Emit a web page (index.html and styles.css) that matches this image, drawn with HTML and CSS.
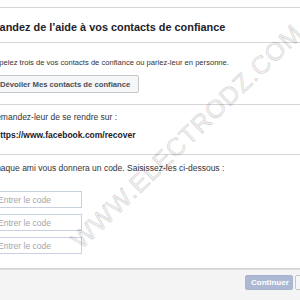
FILE: index.html
```html
<!DOCTYPE html>
<html lang="fr">
<head>
    <meta charset="UTF-8">
    <title>Contacts de confiance</title>
    <link rel="stylesheet" href="styles.css">
</head>
<body>
    <div class="dialog">
        <div class="dialog-header">
            <h3>Demandez de l’aide à vos contacts de confiance</h3>
        </div>
        <div class="section intro">
            <p>Appelez trois de vos contacts de confiance ou parlez-leur en personne.</p>
            <button class="btn">Dévoiler Mes contacts de confiance</button>
        </div>
        <div class="section link">
            <p>Demandez-leur de se rendre sur :</p>
            <p class="url">https://www.facebook.com/recover</p>
        </div>
        <div class="section codes">
            <p>Chaque ami vous donnera un code. Saisissez-les ci-dessous :</p>
            <div class="inputs">
                <input type="text" placeholder="Entrer le code">
                <input type="text" placeholder="Entrer le code">
                <input type="text" placeholder="Entrer le code">
            </div>
        </div>
        <div class="dialog-footer">
            <button class="btn primary">Continuer</button>
            <button class="btn">Annuler</button>
        </div>
    </div>
    <div class="watermark">WWW.ELECTRODZ.COM</div>
</body>
</html>
```

FILE: styles.css
```css
*{
    margin: 0;
    padding: 0;
    box-sizing: border-box;
}
body{
    width: 300px;
    height: 300px;
    overflow: hidden;
    position: relative;
    background: #fff;
    font-family: "Liberation Sans", Arial, sans-serif;
    font-size: 8.5px;
    line-height: 11px;
    color: #333;
}
.dialog{
    width: 420px;
    margin-top: 7px;
    margin-left: -10px;
    border-top: 1px solid #d6d6d6;
}
.dialog-header{
    height: 35px;
    display: flex;
    align-items: center;
    padding-top: 4px;
    border-bottom: 1px solid #d6d6d6;
    overflow: hidden;
}
.dialog-header h3{
    margin-left: -14px;
    font-size: 10.9px;
    font-weight: bold;
    color: #1d2129;
    white-space: nowrap;
}
.section{
    border-bottom: 1px solid #d6d6d6;
}
.intro{
    height: 62px;
    padding-top: 14px;
    font-size: 7.6px;
}
.link{
    height: 50px;
    padding-top: 7px;
}
.link .url{
    margin-top: 7px;
    margin-left: 5px;
    font-weight: bold;
    color: #1d2129;
}
.codes{
    height: 114px;
    padding-top: 8px;
}
.btn{
    font-family: inherit;
    font-size: 7.7px;
    font-weight: bold;
    color: #4b4f56;
    background: #f5f6f7;
    border: 1px solid #c4c6ca;
    border-radius: 2px;
    height: 18px;
    padding: 0 8px 0 9px;
}
.intro .btn{
    margin-top: 7px;
}
.inputs{
    margin-top: 17px;
    display: flex;
    flex-direction: column;
    gap: 6px;
}
.inputs input{
    width: 92px;
    height: 17px;
    border: 1px solid #c9d0e1;
    padding-left: 7px;
    font-family: inherit;
    font-size: 8.5px;
    color: #333;
}
.inputs input::placeholder{
    color: #a6a6a6;
}
.dialog-footer{
    height: 40px;
    background: #f4f4f4;
    border-top: 1px solid #dcdcdc;
    display: flex;
    gap: 2px;
    padding: 5px 0 0 255px;
}
.dialog-footer .btn{
    height: 15px;
    padding: 0 5px;
    font-size: 8px;
}
.dialog-footer .primary{
    width: 48px;
    background: #adb9d3;
    border-color: #a8b4cf;
    color: #fff;
}
.watermark{
    position: absolute;
    left: 40px;
    top: 142px;
    width: 250px;
    text-align: center;
    font-size: 25px;
    line-height: 30px;
    letter-spacing: 1px;
    color: rgba(0,0,0,0.06);
    -webkit-text-stroke: 0.6px rgba(0,0,0,0.2);
    transform: rotate(-44deg);
    pointer-events: none;
}
```
